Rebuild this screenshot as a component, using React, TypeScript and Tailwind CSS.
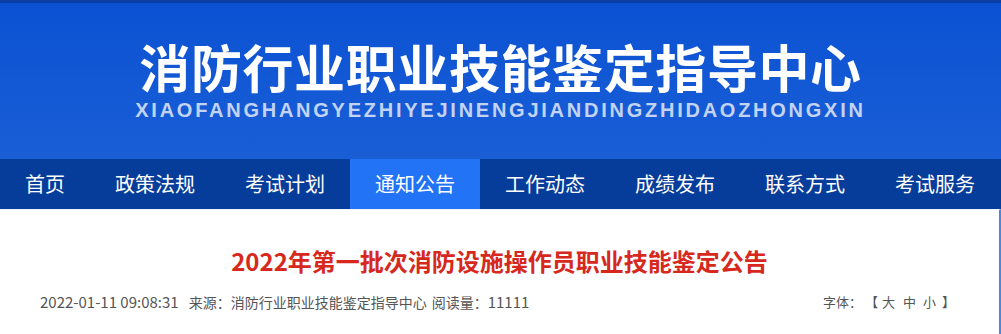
const NAV = ["首页", "政策法规", "考试计划", "通知公告", "工作动态", "成绩发布", "联系方式", "考试服务"];
const ACTIVE = "通知公告";

const cjk = { fontFamily: '"Microsoft YaHei", "Noto Sans CJK SC", sans-serif' };

export default function App() {
  return (
    <div className="min-h-screen w-[1001px] overflow-hidden bg-white" style={cjk}>
      {/* 顶部横幅 */}
      <header className="h-[159px] border-t-[3px] border-[#0a3ea6] bg-gradient-to-b from-[#0a52d3] to-[#1a5ed6]">
        <div className="flex flex-col items-center pt-[38px]">
          <h1 className="text-[51px] leading-[50px] font-bold tracking-[0.6px] text-white">
            消防行业职业技能鉴定指导中心
          </h1>
          <div
            className="mt-[8px] text-[20px] leading-[22px] font-bold tracking-[2.75px] text-[#c3d3f4]"
            style={{ fontFamily: '"Liberation Sans", Arial, sans-serif' }}
          >
            XIAOFANGHANGYEZHIYEJINENGJIANDINGZHIDAOZHONGXIN
          </div>
        </div>
      </header>

      <nav className="flex h-[50px] bg-[#063d9a]">
        {NAV.map((item) => (
          <a
            key={item}
            className={
              item === ACTIVE
                ? "flex items-center bg-[#2273f5] px-[25px] text-[20px] text-white"
                : "flex items-center px-[25px] text-[20px] text-white"
            }
          >
            {item}
          </a>
        ))}
      </nav>

      <main className="h-[126px] border-r-2 border-[#4a86e6] border-t border-t-[#eef6fb]">
        <h2 className="pt-[35px] text-center text-[24px] leading-[32px] font-bold text-[#d6281d]">
          2022年第一批次消防设施操作员职业技能鉴定公告
        </h2>
        <div className="mt-[15px] flex items-center justify-between pl-[40px] pr-[44px] text-[14px] leading-[20px] text-[#555]">
          <div className="flex items-center">
            <span className="text-[15px]">2022-01-11 09:08:31</span>
            <span className="ml-[10px]">来源：消防行业职业技能鉴定指导中心</span>
            <span className="ml-[5px]">阅读量：</span>
            <span className="text-[15px]">11111</span>
          </div>
          <div className="flex items-center text-[13px]">
            <span>字体：</span>
            <span className="ml-[3px]">【</span>
            <span className="ml-[4px]">大</span>
            <span className="ml-[8px]">中</span>
            <span className="ml-[7px]">小</span>
            <span className="ml-[6px]">】</span>
          </div>
        </div>
      </main>
    </div>
  );
}
